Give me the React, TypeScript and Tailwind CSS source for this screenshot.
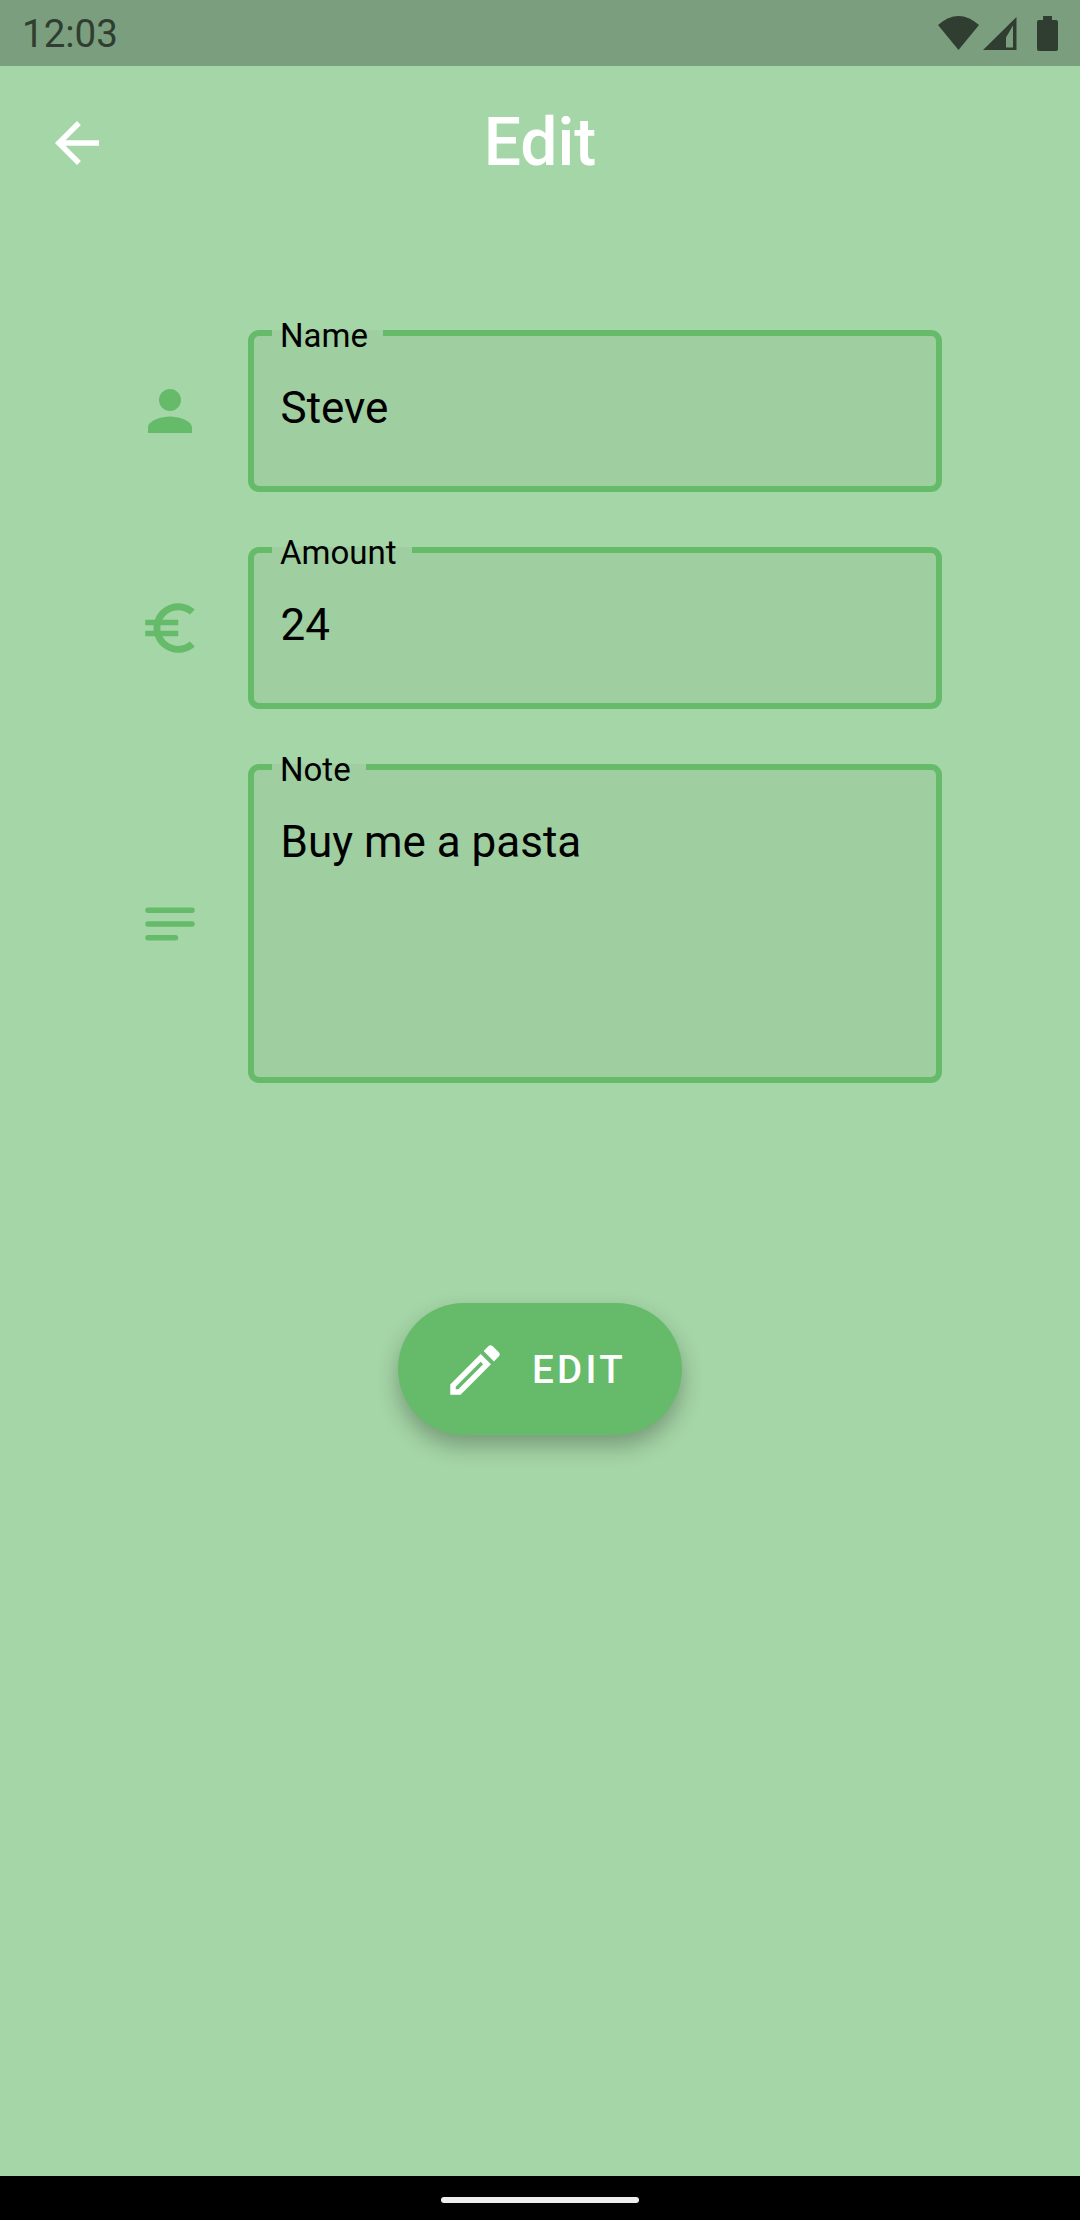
const PERSON = 'M12 12c2.21 0 4-1.79 4-4s-1.79-4-4-4-4 1.79-4 4 1.79 4 4 4zm0 2c-2.67 0-8 1.34-8 4v2h16v-2c0-2.66-5.33-4-8-4z';
const EURO = 'M15 18.5c-2.51 0-4.68-1.42-5.76-3.5H15v-2H8.58c-.05-.33-.08-.66-.08-1s.03-.67.08-1H15V9H9.24C10.32 6.92 12.5 5.5 15 5.5c1.61 0 3.09.59 4.23 1.57L21 5.3C19.41 3.87 17.3 3 15 3c-3.92 0-7.24 2.51-8.48 6H3v2h3.06c-.04.33-.06.66-.06 1s.02.67.06 1H3v2h3.52c1.24 3.49 4.56 6 8.48 6 2.31 0 4.41-.87 6-2.3l-1.78-1.77c-1.13.98-2.6 1.57-4.22 1.57z';
const NOTES = 'M4 6h16a1 1 0 0 1 0 2H4a1 1 0 0 1 0-2zm0 5h16a1 1 0 0 1 0 2H4a1 1 0 0 1 0-2zm0 5h10a1 1 0 0 1 0 2H4a1 1 0 0 1 0-2z';
const PENCIL = 'M14.06 9.02l.92.92L5.92 19H5v-.92l9.06-9.06M17.66 3c-.25 0-.51.1-.7.29l-1.83 1.83 3.75 3.75 1.83-1.83c.39-.39.39-1.02 0-1.41l-2.34-2.34c-.2-.2-.45-.29-.71-.29zm-3.6 3.19L3 17.25V21h3.75L17.81 9.94l-3.75-3.75z';
const BACK = 'M20 11H7.83l5.59-5.59L12 4l-8 8 8 8 1.41-1.41L7.83 13H20v-2z';

function Icon({ d, className }: { d: string; className: string }) {
  return (
    <svg viewBox="0 0 24 24" fill="currentColor" className={className}>
      <path d={d} />
    </svg>
  );
}

function StatusBar() {
  return (
    <div className="flex h-[66px] items-center justify-between bg-[#7b9f7e] pl-[22px] pr-[22px] text-[#2f3e30]">
      <span className="pt-[2px] text-[38.5px] leading-[46px]">12:03</span>
      <div className="flex items-center">
        <svg viewBox="0 0 41 34" fill="currentColor" className="h-[34px] w-[41px]">
          <path d="M0 9Q20.5-9 41 9L20.5 34Z" />
        </svg>
        <svg viewBox="0 0 34 33" fill="currentColor" className="ml-[4px] h-[33px] w-[34px]">
          <path fillRule="evenodd" d="M33.5 0V33H0ZM23 20.5V30.5H30V8.5Z" />
        </svg>
        <svg viewBox="0 0 21 35" fill="currentColor" className="ml-[20px] h-[35px] w-[21px]">
          <path d="M6 0H15V4H19Q21 4 21 6V33Q21 35 19 35H2Q0 35 0 33V6Q0 4 2 4H6Z" />
        </svg>
      </div>
    </div>
  );
}

function Field({ icon, label, value, height }: { icon: string; label: string; value: string; height: string }) {
  return (
    <div className="flex items-center pl-[137px] pr-[138px]">
      <Icon d={icon} className="h-[66px] w-[66px] shrink-0 text-[#66bb6a]" />
      <div className={`relative ml-[45px] flex-1 rounded-[11px] border-[6px] border-[#66bb6a] bg-[#9fcea1] pl-[26.5px] pt-[46px] ${height}`}>
        {/* label sits in a notch cut out of the top border */}
        <div className="absolute -top-[6px] left-[18px] h-[6px] bg-[#9fcea1] pl-[8px] pr-[15px]">
          <span className="-mt-[14px] block text-[33px] leading-[39px] text-black">{label}</span>
        </div>
        <div className="text-[44px] leading-[52px] text-black">{value}</div>
      </div>
    </div>
  );
}

export default function App() {
  return (
    <div className="flex h-[2220px] w-[1080px] flex-col bg-[#a5d6a7] font-['Roboto',sans-serif]">
      <StatusBar />

      <div className="grid h-[154px] grid-cols-[1fr_auto_1fr] items-center">
        <Icon d={BACK} className="ml-[44px] h-[66px] w-[66px] text-white" />
        <h1 className="text-[66px] font-medium leading-[78px] text-white">Edit</h1>
      </div>

      <div className="flex-1 pt-[110px]">
        <div className="flex flex-col gap-[55px]">
          <Field icon={PERSON} label="Name" value="Steve" height="h-[162px]" />
          <Field icon={EURO} label="Amount" value="24" height="h-[162px]" />
          <Field icon={NOTES} label="Note" value="Buy me a pasta" height="h-[319px]" />
        </div>

        <div className="mt-[220px] flex justify-center">
          <button className="flex h-[132px] w-[284px] items-center rounded-full bg-[#66bb6a] pl-[44px] pt-[2px] text-white shadow-[0_11px_22px_rgba(0,0,0,0.28)]">
            <Icon d={PENCIL} className="h-[66px] w-[66px]" />
            <span className="ml-[24px] text-[38.5px] font-medium leading-[46px] tracking-[3.3px]">EDIT</span>
          </button>
        </div>
      </div>

      <div className="h-[44px] bg-black pt-[21px]">
        <div className="mx-auto h-[6px] w-[198px] rounded-full bg-[#efefef]" />
      </div>
    </div>
  );
}
